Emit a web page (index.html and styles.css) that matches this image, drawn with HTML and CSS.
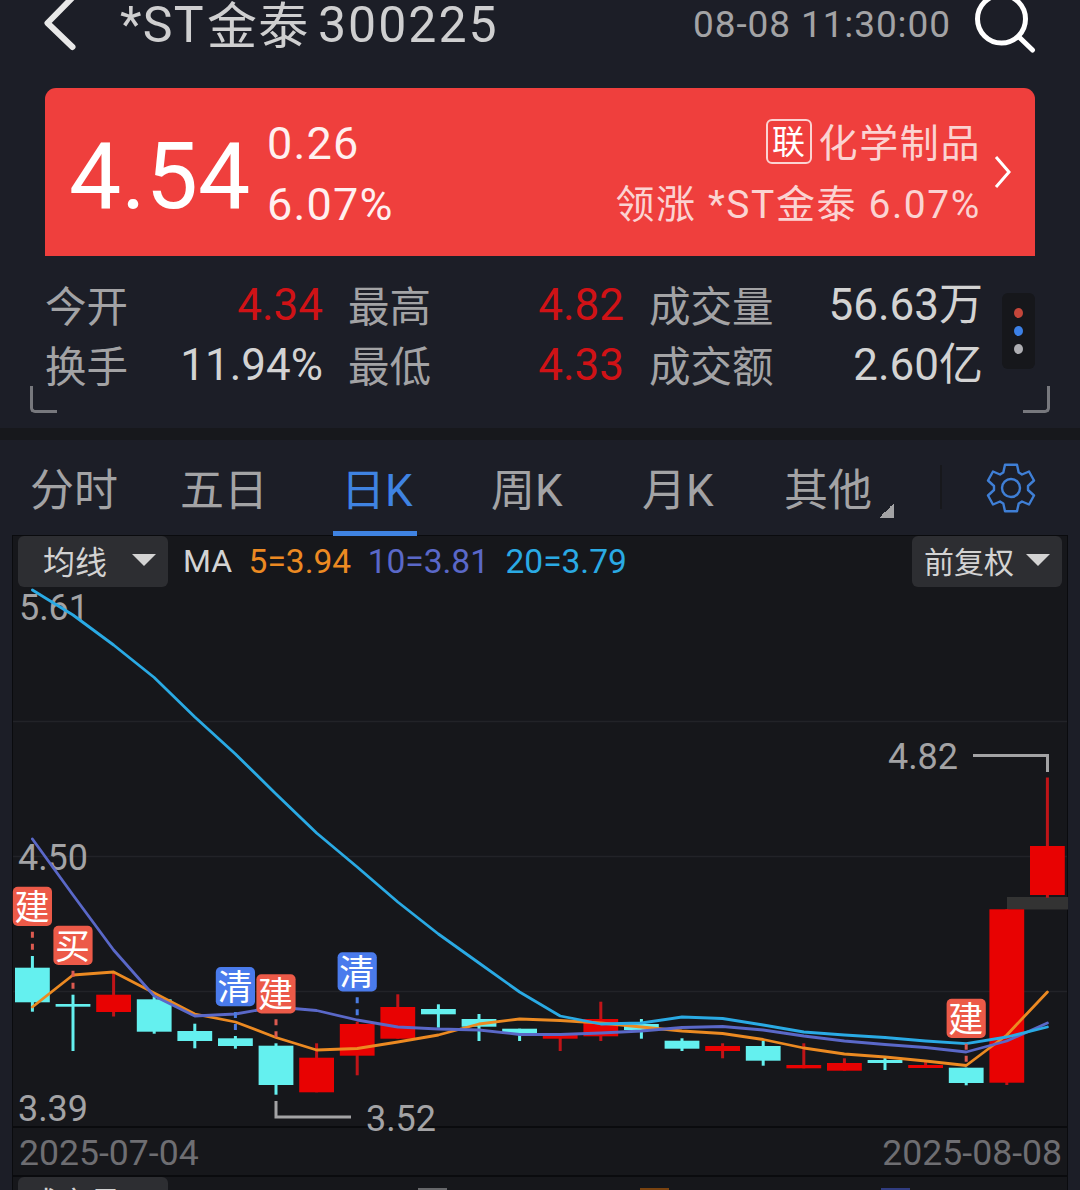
FILE: index.html
```html
<!DOCTYPE html>
<html lang="zh-CN">

<head>
    <meta charset="UTF-8">
    <meta name="viewport" content="width=device-width, initial-scale=1.0">
    <title>*ST金泰 300225</title>
    <link rel="stylesheet" href="styles.css">
</head>

<body>
    <div class="container">
        <div class="header">
            <svg class="back" width="40" height="60" viewBox="40 0 40 60">
                <path d="M77 -7L47.500 23L72.500 47" />
            </svg>
            <p class="stock"><span class="stockName">*ST<span class="cn">金泰</span></span><span class="stockCode">300225</span></p>
            <p class="time">08-08 11:30:00</p>
            <svg class="search" width="70" height="60" viewBox="970 0 70 60">
                <circle cx="1001.500" cy="19" r="24" />
                <path d="M1018.500 36.500L1032.500 50" />
            </svg>
        </div>

        <div class="card">
            <p class="price">4.54</p>
            <div class="change">
                <p>0.26</p>
                <p>6.07%</p>
            </div>
            <div class="sector">
                <p class="sector__name"><span class="tag">联</span><span class="sector__text">化学制品</span></p>
                <p class="sector__top">领涨 *ST金泰 6.07%</p>
            </div>
            <svg class="more" width="20" height="36" viewBox="0 0 20 36">
                <path d="M3 3L16 18L3 33" />
            </svg>
        </div>

        <div class="quote">
            <div class="quote__item"><span>今开</span><b class="up">4.34</b></div>
            <div class="quote__item"><span>最高</span><b class="up">4.82</b></div>
            <div class="quote__item"><span>成交量</span><b>56.63万</b></div>
            <div class="quote__item"><span>换手</span><b>11.94%</b></div>
            <div class="quote__item"><span>最低</span><b class="up">4.33</b></div>
            <div class="quote__item"><span>成交额</span><b>2.60亿</b></div>
            <div class="dots"><i class="dot dot--red"></i><i class="dot dot--blue"></i><i class="dot"></i></div>
            <i class="corner corner--left"></i>
            <i class="corner corner--right"></i>
        </div>

        <div class="tabs">
            <p class="tab tab--fs">分时</p>
            <p class="tab tab--wr">五日</p>
            <p class="tab tab--rk active">日K</p>
            <p class="tab tab--zk">周K</p>
            <p class="tab tab--yk">月K</p>
            <p class="tab tab--qt">其他</p>
            <svg class="setting" width="52" height="52" viewBox="-26 -26 52 52">
                <path d="M-6 -23.200H6L7.700 -15.500Q9.500 -14.600 11 -13.500L18 -16.500L23 -7.500L17 -2V2L23 7.500L18 16.500L11 13.500Q9.500 14.600 7.700 15.500L6 23.200H-6L-7.700 15.500Q-9.500 14.600 -11 13.500L-18 16.500L-23 7.500L-17 2V-2L-23 -7.500L-18 -16.500L-11 -13.500Q-9.500 -14.600 -7.700 -15.500Z" />
                <circle r="9" />
            </svg>
        </div>

        <div class="panel">
            <div class="toolbar">
                <div class="select select--ma">均线<i class="arrow"></i></div>
                <p class="ma ma--name">MA</p>
                <p class="ma ma5">5=3.94</p>
                <p class="ma ma10">10=3.81</p>
                <p class="ma ma20">20=3.79</p>
                <div class="select select--fq">前复权<i class="arrow"></i></div>
            </div>
            <svg class="chart" width="1054" height="539" viewBox="13 587 1054 539"></svg>
            <div class="dates">
                <p>2025-07-04</p>
                <p>2025-08-08</p>
            </div>
            <div class="volume">
                <div class="select select--vol">成交量</div>
                <i class="peek peek--grey"></i>
                <i class="peek peek--orange"></i>
                <i class="peek peek--blue"></i>
            </div>
        </div>
    </div>

    <script>
        // type, body top, body bottom, wick top, wick bottom
        const candles = [
            ["down", 967.7, 1002.3, 956, 1011.7],
            ["down", 1004, 1006.7, 994.7, 1051],
            ["rise", 994.7, 1012, 972.5, 1016.5],
            ["down", 999.3, 1031.7, 996.5, 1033.7],
            ["down", 1031, 1041, 1023.7, 1048.3],
            ["down", 1038.3, 1046, 1036, 1048.7],
            ["down", 1045.7, 1085, 1043.3, 1094.7],
            ["rise", 1057.7, 1092.3, 1043.3, 1092.3],
            ["rise", 1024, 1055.7, 1021.7, 1075.3],
            ["rise", 1007, 1038.7, 994.3, 1038.7],
            ["down", 1009, 1014.3, 1004.3, 1027.7],
            ["down", 1019, 1026.7, 1014, 1041],
            ["down", 1028.7, 1034, 1028.7, 1041],
            ["rise", 1035, 1038.7, 1035, 1051],
            ["rise", 1019, 1036.3, 1001.7, 1041],
            ["down", 1024, 1030, 1019, 1038.7],
            ["down", 1040.7, 1048.7, 1038.3, 1051],
            ["rise", 1046, 1051, 1043.3, 1058.3],
            ["down", 1046, 1060.7, 1041, 1065.7],
            ["rise", 1065, 1068.3, 1043.3, 1068.3],
            ["rise", 1063, 1070.7, 1058.3, 1070.7],
            ["down", 1060, 1063, 1056.3, 1070],
            ["rise", 1065, 1068, 1060.7, 1068],
            ["down", 1067.7, 1083, 1067.7, 1085.3],
            ["rise", 909.3, 1082.7, 909.3, 1085],
            ["rise", 846, 895, 777.5, 897.7]
        ];
        const lines = {
            line5: [1007, 975, 972, 993, 1014, 1022, 1037.5, 1050, 1048.5, 1042, 1035, 1024, 1019, 1020.5, 1023, 1027, 1031, 1033.5, 1039.5, 1048, 1054, 1057, 1061, 1065.5, 1035, 992],
            line10: [839, 895, 950, 996, 1016, 1014, 1007, 1010.5, 1020, 1027, 1029, 1030, 1034.5, 1034.5, 1033, 1031, 1027.5, 1026.5, 1030, 1036, 1041, 1044.5, 1047.5, 1052, 1041, 1023],
            line20: [590, 615, 645, 677.5, 717, 754, 794, 833, 867, 902, 934, 963, 992, 1016, 1024, 1023, 1017, 1018.5, 1025, 1032, 1035, 1037.5, 1041, 1043.7, 1037, 1027]
        };
        // candle index, text, type, badge top, end of the dashes
        const marks = [
            [0, "建", "buy", 886.7, 950],
            [1, "买", "buy", 925.7, 989],
            [5, "清", "sell", 967, 1031],
            [6, "建", "buy", 974.3, 1038],
            [8, "清", "sell", 952.3, 1016],
            [23, "建", "buy", 998.7, 1062]
        ];

        function getX(i) {
            return 32.4 + i * 40.6;
        }

        function drawChart() {
            let text = "";
            for (const y of [721.5, 856.5, 991.5]) {
                text += `<path class="grid" d="M13 ${y}H1067" />`;
            }
            text += `<rect class="gap" x="1007" y="897" width="61" height="12.500" />`;
            text += `<text class="label" x="19" y="620" textLength="70">5.61</text>
                <text class="label" x="18" y="870" textLength="70">4.50</text>
                <text class="label" x="18" y="1121" textLength="70">3.39</text>`;
            for (let i = 0; i < candles.length; i++) {
                const [type, top, bottom, high, low] = candles[i];
                text += `<rect class="wick ${type}" x="${getX(i) - 1.5}" y="${high}" width="3" height="${low - high}" />
                    <rect class="${type}" x="${getX(i) - 17.4}" y="${top}" width="34.800" height="${bottom - top}" />`;
            }
            for (const name in lines) {
                const points = lines[name].map((y, i) => getX(i) + "," + y).join(" ");
                text += `<polyline class="line ${name}" points="${points}" />`;
            }
            for (const [i, word, type, top, end] of marks) {
                const x = getX(i);
                text += `<path class="dash ${type}" d="M${x} ${top + 45}V${end}" />
                    <rect class="mark ${type}" x="${x - 19.6}" y="${top}" width="39.200" height="39.200" rx="5" />
                    <text class="markText" x="${x - 0.5}" y="${top + 33}">${word}</text>`;
            }
            text += `<path class="pointer" d="M973 755.500H1047.500V772" />
                <text class="label" x="888" y="769" textLength="70">4.82</text>
                <path class="pointer" d="M276 1101V1117H351" />
                <text class="label" x="366" y="1131" textLength="70">3.52</text>`;
            document.getElementsByClassName("chart")[0].innerHTML = text;
        }
        drawChart();
    </script>
</body>

</html>
```
FILE: styles.css
```css
* {
    margin: 0;
    padding: 0;
    box-sizing: border-box;
}

body {
    background-color: #1c1e27;
    font-family: Roboto, "Noto Sans CJK SC", sans-serif;
    color: #a3a3a5;
}

.container {
    width: 1080px;
    height: 1190px;
    overflow: hidden;
}

p {
    white-space: nowrap;
}

svg {
    display: block;
    fill: none;
    overflow: visible;
}

.header {
    display: flex;
    height: 88px;
    padding-left: 40px;
}

.back {
    stroke: #e8e8e8;
    stroke-width: 6;
    stroke-linecap: round;
    stroke-linejoin: round;
}

.stock {
    display: flex;
    width: 574px;
    padding-left: 40px;
    line-height: 50px;
    font-size: 50px;
    color: #cfcfd0;
}

.stockName {
    width: 198px;
    letter-spacing: 1.3px;
}

.cn {
    margin-left: 2px;
    vertical-align: -2px;
}

.stockCode {
    letter-spacing: 2px;
}

.time {
    width: 316px;
    padding-left: 39px;
    line-height: 50px;
    font-size: 37px;
    letter-spacing: 0.9px;
}

.search {
    stroke: #fff;
    stroke-width: 5;
    stroke-linecap: round;
}

.card {
    display: flex;
    align-items: center;
    height: 168px;
    margin: 0 45px;
    padding: 0 22px 0 24px;
    border-radius: 11px 11px 0 0;
    background-color: #ef3f3d;
    color: #fff;
}

.price {
    width: 198px;
    padding-top: 9px;
    font-size: 93px;
    line-height: 100px;
}

.change {
    flex: 1;
    padding-top: 4px;
    font-size: 45px;
    line-height: 61px;
    letter-spacing: 1.2px;
    color: #fff0f0;
}

.sector {
    padding-top: 6px;
    font-size: 39px;
    line-height: 61px;
    letter-spacing: 1.6px;
    text-align: right;
    color: #fbd3d2;
}

.sector__name {
    display: flex;
    justify-content: flex-end;
    align-items: center;
}

.tag {
    width: 46px;
    height: 45px;
    margin: -6px 7px 0 0;
    border: 2px solid #fbd3d2;
    border-radius: 6px;
    font-size: 33px;
    line-height: 43px;
    letter-spacing: 0;
    text-align: center;
    color: #fff;
}

.more {
    margin-left: 12px;
    stroke: #fff;
    stroke-width: 3;
}

.quote {
    position: relative;
    display: grid;
    grid-template-columns: 278px 276px 334px;
    grid-template-rows: 60px 60px;
    column-gap: 25px;
    height: 172px;
    padding: 19px 45px 0;
}

.quote__item {
    display: flex;
    justify-content: space-between;
    font-size: 41.5px;
    line-height: 65px;
}

.quote__item b {
    font-size: 44px;
    font-weight: 400;
    line-height: 60px;
    color: #d3d3d3;
}

.quote__item .up {
    color: #d01216;
}

/* page dots on the right of the quote block */
.dots {
    position: absolute;
    top: 37px;
    right: 45px;
    display: flex;
    flex-direction: column;
    align-items: center;
    gap: 8px;
    width: 33px;
    height: 76px;
    padding-top: 15px;
    border-radius: 6px;
    background-color: #16171b;
}

.dot {
    width: 9px;
    height: 10px;
    border-radius: 50%;
    background-color: #aeaeb2;
}

.dot--red {
    background-color: #c4463a;
}

.dot--blue {
    background-color: #3c80e6;
}

.corner {
    position: absolute;
    top: 130px;
    width: 27px;
    height: 27px;
    border-bottom: 3px solid #77787d;
}

.corner--left {
    left: 30px;
    border-left: 3px solid #77787d;
    border-bottom-left-radius: 5px;
}

.corner--right {
    right: 30px;
    border-right: 3px solid #77787d;
    border-bottom-right-radius: 5px;
}

.tabs {
    display: flex;
    height: 108px;
    padding-left: 30px;
    border-top: 12px solid #17181c;
}

.tab {
    height: 96px;
    font-size: 44px;
    line-height: 102px;
}

.tab--fs {
    width: 150px;
}

.tab--wr {
    width: 153px;
}

.tab--rk {
    width: 84px;
    padding-left: 8px;
}

.tab--zk {
    width: 225px;
    padding-left: 74px;
}

.tab--yk {
    width: 142px;
}

/* small triangle of the drop-down tab */
.tab--qt {
    display: flex;
    align-items: flex-end;
    width: 158px;
    border-right: 2px solid #17181c;
    height: 44px;
    margin-top: 25px;
    line-height: 36px;
}

.tab--qt::after {
    content: "";
    width: 15px;
    height: 15px;
    margin: 0 0 -9px 7px;
    background: linear-gradient(135deg, transparent 50%, #a3a3a5 50%);
}

.active {
    border-bottom: 5px solid #3f83e2;
    color: #3f83e2;
}

.setting {
    margin: 22px 0 0 43px;
    stroke: #3f7fd6;
    stroke-width: 2.4;
    stroke-linejoin: round;
}

.panel {
    width: 1056px;
    height: 660px;
    margin-left: 12px;
    margin-top: -1px;
    border: 1px solid #0a0b0e;
    background-color: #16171b;
}

.toolbar {
    display: flex;
    height: 51px;
    padding: 0 5px;
}

.select {
    display: flex;
    align-items: center;
    width: 150px;
    height: 51px;
    padding-bottom: 3px;
    border-radius: 6px;
    background-color: #2d2e32;
    font-size: 30px;
    color: #d3d3d3;
}

.select--ma {
    padding-left: 25px;
    gap: 25px;
    font-size: 32px;
}

.select--fq {
    margin-left: auto;
    padding-left: 12px;
    gap: 12px;
}

.arrow {
    border-top: 12px solid #d3d3d3;
    border-left: 12px solid transparent;
    border-right: 12px solid transparent;
}

.ma {
    padding-left: 16.5px;
    font-size: 33.5px;
    line-height: 51px;
    color: #d3d3d3;
}

.ma--name {
    padding-left: 15px;
    font-size: 32px;
}

.ma5 {
    color: #ec8a22;
}

.ma10 {
    color: #5a68c8;
}

.ma20 {
    color: #2aaae4;
}

.grid {
    stroke: #222328;
    stroke-width: 1.5;
}

.gap {
    fill: #333;
}

.rise {
    fill: #e80202;
}

.down {
    fill: #64f0ef;
}

.wick.rise {
    fill: #c01418;
}

.line {
    stroke-width: 2.8;
    stroke-linejoin: round;
    stroke-linecap: round;
}

.line5 {
    stroke: #ec8a22;
}

.line10 {
    stroke: #5a68c8;
}

.line20 {
    stroke: #2aaae4;
}

.mark.buy {
    fill: #ec5a48;
}

.mark.sell {
    fill: #4a7bec;
}

.markText {
    fill: #fff;
    font-size: 35px;
    text-anchor: middle;
}

.dash {
    stroke-width: 3;
    stroke-dasharray: 6 6;
}

.dash.buy {
    stroke: #dc5a50;
}

.dash.sell {
    stroke: #4a7be0;
}

.label {
    fill: #a3a3a5;
    font-size: 36px;
}

.pointer {
    stroke: #a3a3a5;
    stroke-width: 3;
}

.dates {
    display: flex;
    justify-content: space-between;
    height: 51px;
    padding: 0 5px 0 6px;
    border-top: 2px solid #0a0b0e;
    border-bottom: 2px solid #0a0b0e;
    font-size: 35.6px;
    line-height: 51px;
    color: #6e6e72;
}

.volume {
    display: flex;
    padding: 0 5px;
}

.select--vol {
    padding-left: 10px;
    padding-bottom: 4px;
    font-size: 31px;
}

/* tops of the next legend row */
.peek {
    width: 29px;
    height: 2px;
    margin-top: 11px;
}

.peek--grey {
    margin-left: 250px;
    background-color: #66676a;
}

.peek--orange {
    margin-left: 193px;
    background-color: #7a4310;
}

.peek--blue {
    margin-left: 212px;
    background-color: #303c80;
}
```
